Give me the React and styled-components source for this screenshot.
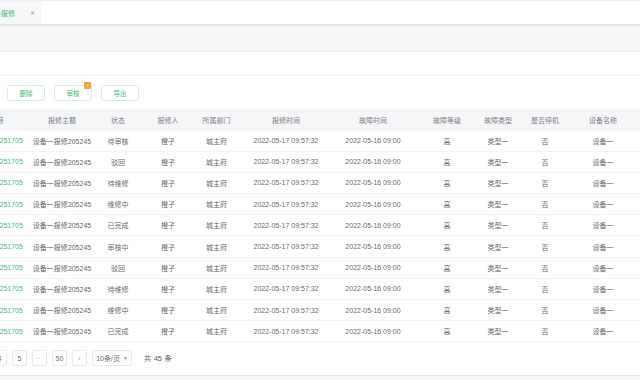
import React from "react";
import styled, { createGlobalStyle } from "styled-components";

const GlobalStyle = createGlobalStyle`
  body {
    margin: 0;
    background: #f5f6f8;
    overflow: hidden;
    font-family: "Liberation Sans", "Noto Sans CJK SC", sans-serif;
  }
`;

const Page = styled.div`
  width: 640px;
  height: 380px;
  overflow: hidden;
  background: #f5f6f8;
`;

const TabBar = styled.div`
  height: 23px;
  display: flex;
  align-items: stretch;
  background: #fff;
  border-top: 1px solid #f0f1f3;
  border-bottom: 1px solid #e1e2e4;
  box-shadow: 0 1px 2px rgba(0, 0, 0, 0.08);
`;

const Tab = styled.div`
  margin-left: -23px;
  padding: 0 6px 0 10px;
  display: flex;
  align-items: center;
  gap: 15px;
  background: #f6f7f9;
  color: #4cb37c;
  font-size: 7px;
`;

const Close = styled.span`
  color: #9a9ca0;
  font-size: 6px;
  line-height: 1;
`;

const Strip = styled.div`
  height: 25px;
  margin-top: 1px;
  background: #f5f6f8;
  border-bottom: 1px solid #eceef1;
`;

const Card = styled.div`
  margin-left: -60px;
  padding-left: 8px;
  width: 720px;
  height: 323px;
  background: #fff;
  border-bottom: 1px solid #e6e7e9;
  display: flex;
  flex-direction: column;
`;

const SearchArea = styled.div`
  height: 23px;
  border-bottom: 1px solid #f1f2f4;
`;

const Toolbar = styled.div`
  display: flex;
  gap: 9px;
  padding: 9px 0 8px 12px;
`;

const Button = styled.div`
  position: relative;
  width: 38px;
  height: 16px;
  box-sizing: border-box;
  border: 1px solid #d8eee2;
  border-radius: 3px;
  display: flex;
  align-items: center;
  justify-content: center;
  color: #4cb37c;
  font-size: 6.5px;
`;

const Badge = styled.span`
  position: absolute;
  top: -4px;
  right: 0;
  width: 7px;
  height: 7px;
  border-radius: 1px;
  background: #f3a43a;
  color: #fff;
  font-size: 5px;
  display: flex;
  align-items: center;
  justify-content: center;
`;

const cols = "84px 60px 52px 48px 49px 90px 84px 64px 38px 56px 60px";

const HeadRow = styled.div`
  display: grid;
  grid-template-columns: ${cols};
  height: 21.5px;
  align-items: center;
  background: #f5f6f7;
  color: #7f8287;
  font-size: 7px;
  text-align: center;
  white-space: nowrap;
`;

const Row = styled.div`
  display: grid;
  grid-template-columns: ${cols};
  height: 21.2px;
  box-sizing: border-box;
  align-items: center;
  border-bottom: 1px solid #f5f5f6;
  color: #686b70;
  font-size: 7px;
  text-align: center;
  white-space: nowrap;
`;

const Code = styled.span`
  color: #52b882;
`;

const Pager = styled.div`
  display: flex;
  align-items: center;
  gap: 5px;
  padding: 8px 0 0 24px;
  font-size: 7px;
  color: #6b6e73;
`;

const PageBox = styled.div`
  width: ${(p) => p.$w || 15}px;
  height: 16px;
  box-sizing: border-box;
  border: 1px solid #e8e9eb;
  border-radius: 2px;
  display: flex;
  align-items: center;
  justify-content: center;
  gap: 3px;
  color: ${(p) => (p.$muted ? "#a3a5a9" : "#6b6e73")};
`;

const Caret = styled.span`
  font-size: 5px;
  color: #909399;
`;

const Total = styled.span`
  margin-left: 7px;
  color: #54575c;
  word-spacing: 1px;
`;

const statuses = [
  "待审核",
  "驳回",
  "待维修",
  "维修中",
  "已完成",
  "审核中",
  "驳回",
  "待维修",
  "维修中",
  "已完成",
];

const headers = [
  "报修单号",
  "报修主题",
  "状态",
  "报修人",
  "所属部门",
  "报修时间",
  "故障时间",
  "故障等级",
  "故障类型",
  "是否停机",
  "设备名称",
];

const App = () => {
  return (
    <>
      <GlobalStyle />
      <Page>
        <TabBar>
          <Tab>
            <span>设备报修</span>
            <Close>✕</Close>
          </Tab>
        </TabBar>
        <Strip />
        <Card>
          <SearchArea />
          <Toolbar>
            <Button>新增</Button>
            <Button>删除</Button>
            <Button>
              审核
              <Badge>!</Badge>
            </Button>
            <Button>导出</Button>
          </Toolbar>

          <HeadRow>
            {headers.map((h) => (
              <span key={h}>{h}</span>
            ))}
          </HeadRow>
          {statuses.map((s, i) => (
            <Row key={i}>
              <Code>WX20220517251705</Code>
              <span>设备一报修205245</span>
              <span>{s}</span>
              <span>橙子</span>
              <span>城主府</span>
              <span>2022-05-17 09:57:32</span>
              <span>2022-05-16 09:00</span>
              <span>高</span>
              <span>类型一</span>
              <span>否</span>
              <span>设备一</span>
            </Row>
          ))}

          <Pager>
            <PageBox>3</PageBox>
            <PageBox>4</PageBox>
            <PageBox>5</PageBox>
            <PageBox $muted>···</PageBox>
            <PageBox>50</PageBox>
            <PageBox $muted>›</PageBox>
            <PageBox $w={40}>
              10条/页 <Caret>▼</Caret>
            </PageBox>
            <Total>共 45 条</Total>
          </Pager>
        </Card>
      </Page>
    </>
  );
};

export default App;
